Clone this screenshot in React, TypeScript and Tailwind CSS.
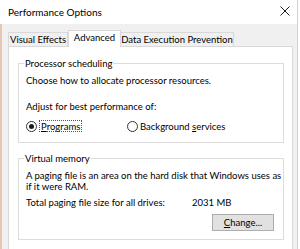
export default function App() {
  return (
    <div className="w-[300px] h-[249px] overflow-hidden bg-white flex font-['Lato',sans-serif] text-[9.5px] leading-[11px] text-black whitespace-nowrap">
      <div className="w-[298px] h-full flex flex-col border-r border-[#e8cbbb]">
        {/* title bar */}
        <div className="h-[24px] shrink-0 bg-white flex items-center justify-between pl-[8px] pr-[8px]">
          <span className="text-[10px] leading-[14px]">Performance Options</span>
          <svg width="10" height="10" viewBox="0 0 10 10" className="mt-[-2px] mr-[-1px]">
            <path d="M0.5 0.5 L9.5 9.5 M9.5 0.5 L0.5 9.5" stroke="#1a1a1a" strokeWidth="1" fill="none" />
          </svg>
        </div>

        {/* body */}
        <div className="flex-1 min-w-0 flex flex-col bg-[#f0f0f0] border-l-2 border-[#e9c6b2] pl-[6px] pr-[4px] pt-[6px]">
          {/* tabs */}
          <div className="flex items-end h-[16px]">
            <div className="w-[60px] h-[14px] flex items-center justify-center bg-[#f0f0f0] border border-b-0 border-[#d9d9d9]">
              Visual Effects
            </div>
            <div className="relative z-10 w-[53px] h-[17px] -mb-px flex items-start justify-center pt-[1px] bg-white border border-b-0 border-[#d9d9d9]">
              Advanced
            </div>
            <div className="w-[113px] h-[14px] flex items-center justify-center bg-[#f0f0f0] border border-b-0 border-l-0 border-[#d9d9d9]">
              Data Execution Prevention
            </div>
          </div>

          {/* panel */}
          <div className="flex-1 min-w-0 bg-white border border-b-0 border-[#d9d9d9] pl-[9px] pr-[8px] pt-[11px]">
            <fieldset className="min-w-0 border border-[#dcdcdc] pb-[10px]">
              <legend className="ml-[5px] px-[1px]">Processor scheduling</legend>
              <div className="px-[7px] pt-[6px]">
                <div>Choose how to allocate processor resources.</div>
                <div className="mt-[15px]">Adjust for best performance of:</div>
                <div className="mt-[8px] flex items-center h-[12px]">
                  <div className="w-[101px] flex items-center">
                    <span className="w-[11px] h-[11px] rounded-full border border-[#333] flex items-center justify-center">
                      <span className="w-[5px] h-[5px] rounded-full bg-[#1a1a1a]" />
                    </span>
                    <span className="ml-[2px] px-[1px] h-[12px] flex items-center border border-dotted border-[#555]">
                      <span className="underline underline-offset-1">P</span>rograms
                    </span>
                  </div>
                  <div className="flex items-center">
                    <span className="w-[11px] h-[11px] rounded-full border border-[#333]" />
                    <span className="ml-[2px]">
                      Background <span className="underline underline-offset-1">s</span>ervices
                    </span>
                  </div>
                </div>
              </div>
            </fieldset>

            <fieldset className="min-w-0 mt-[10px] border border-[#dcdcdc] pb-[8px]">
              <legend className="ml-[5px] px-[1px]">Virtual memory</legend>
              <div className="px-[7px] pt-[6px]">
                <div>
                  A paging file is an area on the hard disk that Windows uses as
                  <br />
                  if it were RAM.
                </div>
                <div className="mt-[5px] flex">
                  <span className="w-[166px]">Total paging file size for all drives:</span>
                  <span>2031 MB</span>
                </div>
              </div>
              <div className="flex justify-end pr-[9px] mt-[6px]">
                <button className="w-[62px] h-[17px] bg-[#e1e1e1] border border-[#adadad] flex items-center justify-center">
                  <span>
                    <span className="underline underline-offset-1">C</span>hange...
                  </span>
                </button>
              </div>
            </fieldset>
          </div>
        </div>
      </div>
    </div>
  );
}
